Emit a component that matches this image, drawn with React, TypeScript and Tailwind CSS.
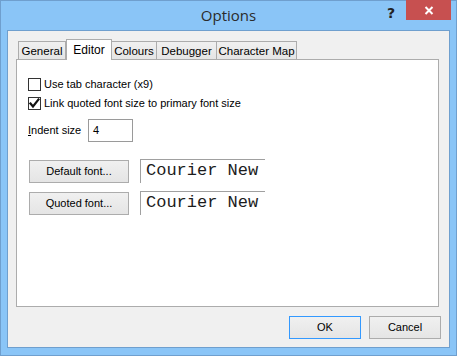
import React from "react";

const ui = { fontFamily: '"Liberation Sans", Arial, sans-serif' };

function Tab({ label, w, selected, first }: { label: string; w: string; selected?: boolean; first?: boolean }) {
  if (selected) {
    return (
      <div
        className={`${w} h-[21px] -mb-px relative z-10 bg-white border-t border-l border-r border-[#acacac] flex items-start justify-center pt-[3px] text-[12px] leading-[14px] text-black`}
      >
        {label}
      </div>
    );
  }
  return (
    <div
      className={`${w} h-[18px] ${first ? "" : "-ml-px"} bg-gradient-to-b from-[#f0f0f0] to-[#e5e5e5] border-t border-l border-r border-[#acacac] flex items-start justify-center pt-[2px] text-[11.5px] leading-[14px] text-black`}
    >
      {label}
    </div>
  );
}

function Checkbox({ checked }: { checked?: boolean }) {
  return (
    <div className="w-[13px] h-[13px] border border-[#333333] bg-white flex items-center justify-center shrink-0">
      {checked && (
        <svg width="11" height="11" viewBox="0 0 11 11">
          <path d="M1.5 5.5 L4 8.5 L9.5 1.5" fill="none" stroke="#111" strokeWidth="2.2" strokeLinecap="square" strokeLinejoin="miter" />
        </svg>
      )}
    </div>
  );
}

function WinButton({ label, w, h, focused }: { label: string; w: string; h: string; focused?: boolean }) {
  return (
    <div
      className={`${w} ${h} border ${focused ? "border-[#3399ff]" : "border-[#acacac]"} bg-gradient-to-b from-[#f0f0f0] to-[#e5e5e5] flex items-center justify-center text-[11px] leading-[13px] text-black`}
    >
      {label}
    </div>
  );
}

function FontRow({ label }: { label: string }) {
  return (
    <div className="flex items-start h-[24px]">
      <div className="ml-[12px] mt-[1px]">
        <WinButton label={label} w="w-[100px]" h="h-[23px]" />
      </div>
      <div
        className="ml-[11px] w-[125px] h-[24px] border-t border-l border-[#a0a0a0] bg-white pl-[5px] pt-[1px] text-[17px] leading-[20px] text-[#1c1c1c]"
        style={{ fontFamily: '"Liberation Mono", "Courier New", monospace' }}
      >
        Courier New
      </div>
    </div>
  );
}

export default function App() {
  return (
    <div
      className="w-[457px] h-[356px] bg-[#8ac5f7] border border-[#6f9fce] flex flex-col"
      style={ui}
    >
      {/* Title bar */}
      <div className="h-[29px] shrink-0 grid grid-cols-[1fr_auto_1fr]">
        <div />
        <div
          className="pt-[4px] text-[15px] leading-[20px] text-[#2b2b2b]"
          style={{ fontFamily: '"Open Sans", "Liberation Sans", sans-serif' }}
        >
          Options
        </div>
        <div className="flex justify-end items-start">
          <div className="mt-[4px] mr-[11px] text-[14px] leading-[16px] font-bold text-[#222]" style={{ fontFamily: '"DejaVu Sans", sans-serif' }}>?</div>
          <div className="w-[45px] h-[20px] -mt-px bg-[#c75050] flex items-center justify-center mr-[5px]">
            <svg width="10" height="9" viewBox="0 0 10 9">
              <path d="M1.5 1 L8.5 8 M8.5 1 L1.5 8" stroke="white" strokeWidth="2" />
            </svg>
          </div>
        </div>
      </div>

      {/* Client area */}
      <div className="flex-1 mx-[6px] mb-[7px] border border-[#6f9fce] bg-[#f0f0f0] flex flex-col">
        <div className="ml-[8px] mr-[10px] mt-[8px]">
          {/* Tabs */}
          <div className="flex items-end h-[20px] pl-[2px]">
            <Tab label="General" w="w-[48px]" first />
            <Tab label="Editor" w="w-[46px]" selected />
            <Tab label="Colours" w="w-[46px]" />
            <Tab label="Debugger" w="w-[61px]" />
            <Tab label="Character Map" w="w-[81px]" />
          </div>
          {/* Panel */}
          <div className="h-[248px] border border-[#acacac] bg-white text-[11px] leading-[13px] text-black">
            <div className="flex flex-col">
              <div className="ml-[11px] mt-[18px] h-[13px] flex items-center gap-[3px]">
                <Checkbox />
                <span>Use tab character (x9)</span>
              </div>
              <div className="ml-[11px] mt-[6px] h-[13px] flex items-center gap-[3px]">
                <Checkbox checked />
                <span>Link quoted font size to primary font size</span>
              </div>
              <div className="ml-[11px] mt-[9px] h-[23px] flex items-center">
                <span className="w-[60px]"><span className="underline">I</span>ndent size</span>
                <div className="w-[45px] h-[23px] border border-[#9a9a9a] bg-white pl-[4px] flex items-center">4</div>
              </div>
              <div className="mt-[17px]">
                <FontRow label="Default font..." />
              </div>
              <div className="mt-[8px]">
                <FontRow label="Quoted font..." />
              </div>
            </div>
          </div>
        </div>
        {/* Bottom buttons */}
        <div className="flex justify-end gap-[8px] mr-[8px] mt-[9px]">
          <WinButton label="OK" w="w-[72px]" h="h-[23px]" focused />
          <WinButton label="Cancel" w="w-[72px]" h="h-[23px]" />
        </div>
      </div>
    </div>
  );
}
